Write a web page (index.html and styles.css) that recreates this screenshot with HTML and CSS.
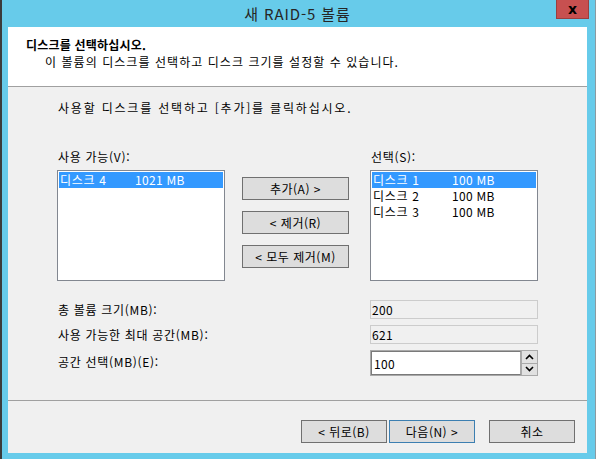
FILE: index.html
```html
<!DOCTYPE html>
<html lang="ko">
<head>
  <meta charset="UTF-8" />
  <meta name="viewport" content="width=device-width, initial-scale=1.0" />
  <title>새 RAID-5 볼륨</title>
  <link rel="stylesheet" href="styles.css">
</head>
<body>
  <div class="screen">
    <div class="window">
      <!-- Title bar -->
      <div class="titlebar">
        <span class="title">새 RAID-5 볼륨</span>
        <button class="close">x</button>
      </div>

      <div class="client">
        <div class="header">
          <div class="header-title">디스크를 선택하십시오.</div>
          <div class="header-sub">이 볼륨의 디스크를 선택하고 디스크 크기를 설정할 수 있습니다.</div>
        </div>

        <div class="content">
          <p class="intro">사용할 디스크를 선택하고 [추가]를 클릭하십시오.</p>

          <!-- Available / selected disk lists -->
          <div class="picker">
            <div class="col">
              <div class="label">사용 가능(V):</div>
              <ul class="listbox left">
                <li class="selected"><span class="disk">디스크 4</span><span class="num">1021 MB</span></li>
              </ul>
            </div>
            <div class="moves">
              <button class="btn">추가(A) &gt;</button>
              <button class="btn">&lt; 제거(R)</button>
              <button class="btn">&lt; 모두 제거(M)</button>
            </div>
            <div class="col">
              <div class="label">선택(S):</div>
              <ul class="listbox right">
                <li class="selected"><span class="disk">디스크 1</span><span class="num">100 MB</span></li>
                <li><span class="disk">디스크 2</span><span class="num">100 MB</span></li>
                <li><span class="disk">디스크 3</span><span class="num">100 MB</span></li>
              </ul>
            </div>
          </div>

          <!-- Size fields -->
          <div class="fields">
            <div class="row">
              <span class="label">총 볼륨 크기(MB):</span>
              <div class="readonly num">200</div>
            </div>
            <div class="row">
              <span class="label">사용 가능한 최대 공간(MB):</span>
              <div class="readonly num">621</div>
            </div>
            <div class="row spin-row">
              <span class="label">공간 선택(MB)(E):</span>
              <div class="spin">
                <input type="text" value="100">
                <div class="spin-btns">
                  <span class="up"><svg width="9" height="6" viewBox="0 0 9 6"><path d="M1 5 L4.5 1.5 L8 5" fill="none" stroke="#000" stroke-width="1.6"/></svg></span>
                  <span class="down"><svg width="9" height="6" viewBox="0 0 9 6"><path d="M1 1 L4.5 4.5 L8 1" fill="none" stroke="#000" stroke-width="1.6"/></svg></span>
                </div>
              </div>
            </div>
          </div>
        </div>

        <div class="footer">
          <button class="btn wide">&lt; 뒤로(B)</button>
          <button class="btn wide default">다음(N) &gt;</button>
          <button class="btn wide cancel">취소</button>
        </div>
      </div>
    </div>
    <div class="edge"></div>
  </div>
</body>
</html>
```

FILE: styles.css
```css
/* Wizard dialog, Windows 8 look */
body {
  margin: 0;
  padding: 0;
  font-family: "Noto Sans CJK KR", "Noto Sans", sans-serif;
  font-size: 12px;
  letter-spacing: 0.7px;
  color: #000;
  background-color: #fff;
}
.screen {
  display: flex;
  width: 598px;
  height: 459px;
  overflow: hidden;
}
.window {
  box-sizing: border-box;
  width: 595px;
  height: 459px;
  border-left: 2px solid #3b3b3b;
  padding: 0 8px 6px 6px;
  background-color: #67cbea;
  display: flex;
  flex-direction: column;
}
.edge {
  flex: 1;
  border-left: 1px solid #8c9aa0;
  background-color: #fff;
}
.num {
  letter-spacing: 0.3px;
}

/* Title bar */
.titlebar {
  position: relative;
  height: 27px;
  text-align: center;
}
.title {
  display: inline-block;
  font-size: 15px;
  letter-spacing: 0.9px;
  line-height: 27px;
  color: #262626;
}
.close {
  position: absolute;
  top: 0;
  right: -2px;
  width: 33px;
  height: 19px;
  padding: 0;
  border: 1px solid #9a3f3f;
  border-top: none;
  background-color: #c75050;
  font-family: "DejaVu Sans", sans-serif;
  font-size: 14px;
  font-weight: bold;
  line-height: 15px;
  color: #000;
}

/* Client area */
.client {
  height: 426px;
  background-color: #f0f0f0;
  display: flex;
  flex-direction: column;
}
.header {
  box-sizing: border-box;
  height: 60px;
  padding: 9px 0 0 18px;
  background-color: #fff;
  border-bottom: 1px solid #a0a0a0;
  line-height: 17px;
}
.header-title {
  font-weight: bold;
  letter-spacing: 0.2px;
}
.header-sub {
  margin-left: 19px;
  letter-spacing: 1.05px;
}
.content {
  flex: 1;
  padding: 13px 0 0 49px;
}
.intro {
  margin: 0 0 33px 1px;
  line-height: 16px;
  letter-spacing: 1.8px;
}
.label {
  line-height: 16px;
  padding-left: 1px;
}

/* Lists */
.picker {
  display: flex;
}
.col .label {
  margin-bottom: 5px;
}
.listbox {
  box-sizing: border-box;
  width: 168px;
  height: 111px;
  margin: 0;
  padding: 1px;
  list-style: none;
  background-color: #fff;
  border: 1px solid #828790;
}
.listbox li {
  display: flex;
  height: 16px;
  line-height: 16px;
  padding-left: 1px;
}
.listbox li.selected {
  background-color: #3399ff;
  color: #fff;
}
.left .disk {
  width: 75px;
}
.right .disk {
  width: 79px;
}
.moves {
  display: flex;
  flex-direction: column;
  gap: 11px;
  margin: 28px 21px 0 17px;
}
.btn {
  box-sizing: border-box;
  width: 107px;
  height: 23px;
  padding: 0;
  border: 1px solid #707070;
  background-color: #dddddd;
  font-family: inherit;
  font-size: 12px;
  letter-spacing: 0.5px;
  color: #000;
}

/* Size fields */
.fields {
  margin-top: 19px;
  display: flex;
  flex-direction: column;
  gap: 6px;
}
.row {
  display: flex;
  align-items: center;
  justify-content: space-between;
  width: 481px;
}
.readonly {
  box-sizing: border-box;
  width: 168px;
  height: 19px;
  padding-left: 1px;
  line-height: 17px;
  border: 1px solid #cccccc;
}
.spin-row .label {
  margin-top: -3px;
}
.spin {
  box-sizing: border-box;
  display: flex;
  width: 168px;
  height: 26px;
  border: 1px solid #a9a9a9;
}
.spin input {
  box-sizing: border-box;
  width: 150px;
  height: 24px;
  margin: 0;
  padding: 0 0 0 2px;
  border: 1px solid #7a7a7a;
  border-right-color: #a9a9a9;
  font-family: inherit;
  font-size: 12px;
  letter-spacing: 0.3px;
  outline: none;
}
.spin-btns {
  flex: 1;
  display: flex;
  flex-direction: column;
  gap: 1px;
  background-color: #a9a9a9;
  padding: 0 0 0 1px;
}
.spin-btns span {
  flex: 1;
  display: flex;
  align-items: center;
  justify-content: center;
  background-color: #e1e1e1;
}

/* Bottom buttons */
.footer {
  display: flex;
  justify-content: flex-end;
  height: 53px;
  box-sizing: border-box;
  padding: 19px 12px 0 0;
  border-top: 1px solid #a0a0a0;
}
.btn.wide {
  width: 86px;
}
.btn.default {
  margin-left: 2px;
  border-color: #3c7fb1;
}
.btn.cancel {
  margin-left: 14px;
}
```
